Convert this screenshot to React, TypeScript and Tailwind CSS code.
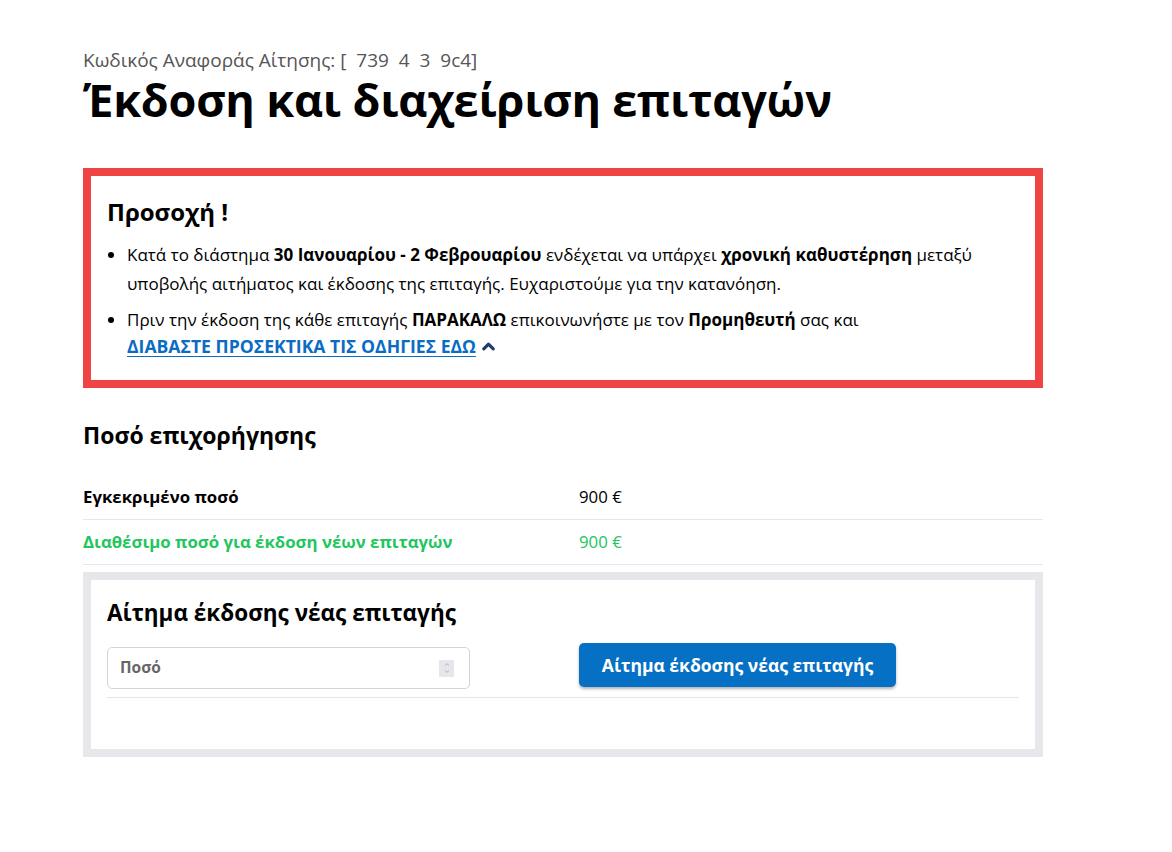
import { ChevronUp, ChevronDown } from 'lucide-react';

export default function App() {
  return (
    <div className="min-h-screen bg-white text-black font-['Open_Sans','Noto_Sans',sans-serif]">
      <div className="w-[960px] ml-[83px] pt-[47px] pb-[90px]">
        {/* Header */}
        <div className="text-[19px] leading-[26px] text-[#555]">
          Κωδικός Αναφοράς Αίτησης: [&nbsp;&nbsp;739&nbsp;&nbsp;4&nbsp;&nbsp;3&nbsp;&nbsp;9c4]
        </div>
        <h1 className="text-[45px] leading-[54px] font-bold tracking-[-0.2px]">
          Έκδοση και διαχείριση επιταγών
        </h1>

        {/* Warning box */}
        <div className="mt-[41px] border-[8px] border-[#ef4444] px-[16px] pt-[20px] pb-[20px]">
          <h2 className="text-[24px] leading-[32px] font-bold">Προσοχή !</h2>
          <ul className="mt-[12px] text-[17px] list-disc pl-[20px] space-y-[8px] marker:text-black">
            <li className="leading-[29px]">
              Κατά το διάστημα <b>30 Ιανουαρίου - 2 Φεβρουαρίου</b> ενδέχεται να υπάρχει{' '}
              <b>χρονική καθυστέρηση</b> μεταξύ υποβολής αιτήματος και έκδοσης της επιταγής.
              Ευχαριστούμε για την κατανόηση.
            </li>
            <li className="leading-[27px]">
              Πριν την έκδοση της κάθε επιταγής <b>ΠΑΡΑΚΑΛΩ</b> επικοινωνήστε με τον{' '}
              <b>Προμηθευτή</b> σας και
              <br />
              <a href="#" className="font-bold text-[17.6px] text-[#0a6cc2] underline underline-offset-[3px]">
                ΔΙΑΒΑΣΤΕ ΠΡΟΣΕΚΤΙΚΑ ΤΙΣ ΟΔΗΓΙΕΣ ΕΔΩ
              </a>
              <ChevronUp className="inline-block w-[19px] h-[19px] ml-[3px] -mt-[4px] text-[#1e3a6e]" strokeWidth={4} />
            </li>
          </ul>
        </div>

        {/* Grant amount */}
        <h2 className="mt-[32px] text-[23px] leading-[30px] font-bold">Ποσό επιχορήγησης</h2>
        <div className="mt-[25px]">
          <div className="grid grid-cols-[496px_1fr] items-center h-[45px] border-b border-[#e5e7eb] text-[16.8px]">
            <span className="font-bold">Εγκεκριμένο ποσό</span>
            <span>900 €</span>
          </div>
          <div className="grid grid-cols-[496px_1fr] items-center h-[45px] border-b border-[#e5e7eb] text-[16.8px] text-[#22c55e]">
            <span className="font-bold">Διαθέσιμο ποσό για έκδοση νέων επιταγών</span>
            <span>900 €</span>
          </div>
        </div>

        {/* New cheque request */}
        <div className="mt-[7px] border-[8px] border-[#e5e7eb] px-[16px] pt-[18px] pb-[51px]">
          <h2 className="text-[22.5px] leading-[30px] font-bold">Αίτημα έκδοσης νέας επιταγής</h2>
          <div className="grid grid-cols-[472px_1fr] items-start mt-[15px] pb-[8px] border-b border-[#e5e7eb]">
            <div className="w-[363px] h-[42px] mt-[4px] border border-[#d1d5db] rounded-[5px] flex items-center justify-between pl-[12px] pr-[15px]">
              <span className="text-[15.5px] font-bold text-[#666]">Ποσό</span>
              <span className="w-[15px] h-[17px] bg-[#e5e7eb] flex flex-col items-center justify-center">
                <ChevronUp className="w-[10px] h-[7px] text-[#888]" strokeWidth={2} />
                <ChevronDown className="w-[10px] h-[7px] text-[#888]" strokeWidth={2} />
              </span>
            </div>
            <div>
              <button className="h-[44px] w-[317px] rounded-[5px] bg-[#0670c4] text-white text-[17.5px] font-bold shadow-[0_2px_3px_rgba(0,0,0,0.3)]">
                Αίτημα έκδοσης νέας επιταγής
              </button>
            </div>
          </div>
        </div>
      </div>
    </div>
  );
}
